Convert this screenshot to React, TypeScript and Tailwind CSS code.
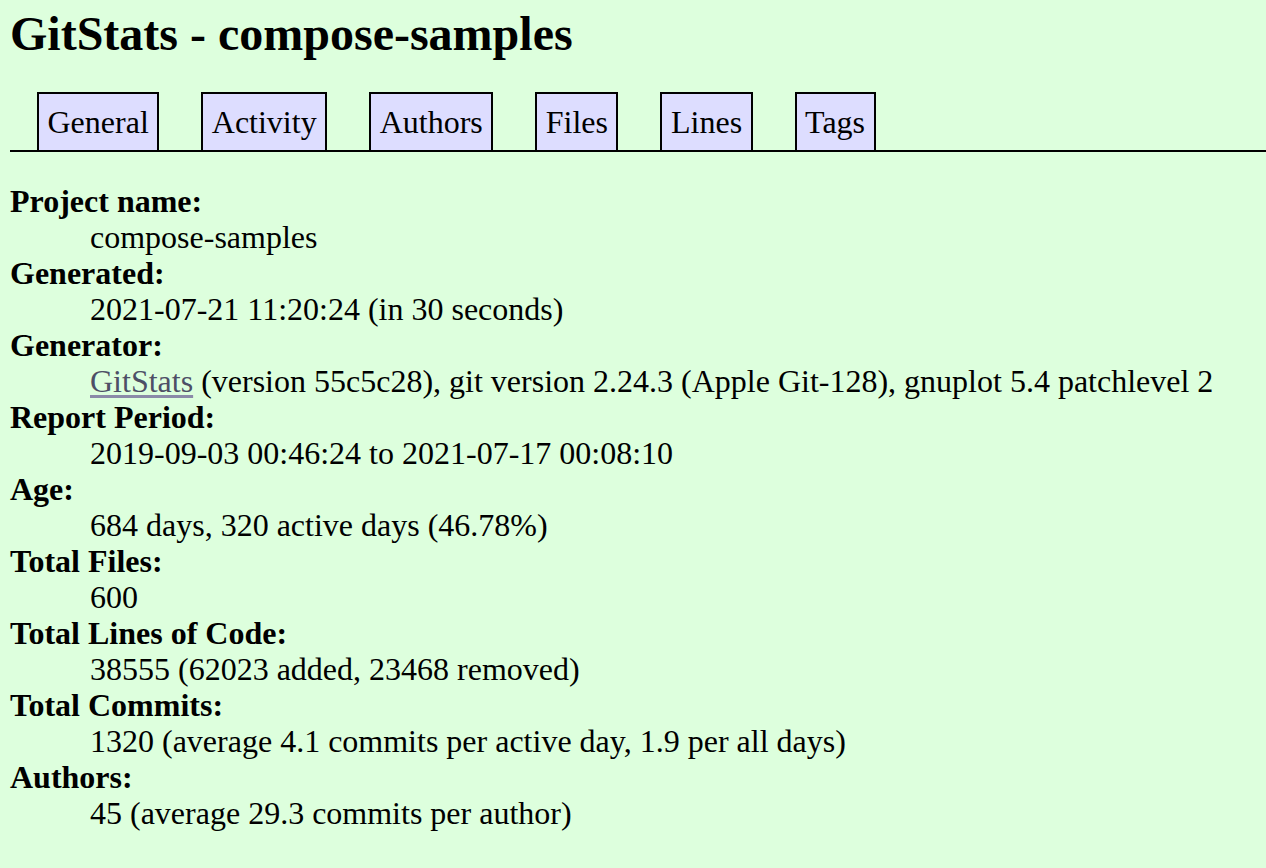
import React from "react";

const tabs = ["General", "Activity", "Authors", "Files", "Lines", "Tags"];

export default function App() {
  const rows: [string, React.ReactNode][] = [
    ["Project name", "compose-samples"],
    ["Generated", "2021-07-21 11:20:24 (in 30 seconds)"],
    [
      "Generator",
      <>
        <a href="#" className="text-[#4d4f66] underline decoration-[#8a8aa8] underline-offset-[3px]">GitStats</a> (version 55c5c28), git version 2.24.3 (Apple Git-128), gnuplot 5.4 patchlevel 2
      </>,
    ],
    ["Report Period", "2019-09-03 00:46:24 to 2021-07-17 00:08:10"],
    ["Age", "684 days, 320 active days (46.78%)"],
    ["Total Files", "600"],
    ["Total Lines of Code", "38555 (62023 added, 23468 removed)"],
    ["Total Commits", "1320 (average 4.1 commits per active day, 1.9 per all days)"],
    ["Authors", "45 (average 29.3 commits per author)"],
  ];
  return (
    <div className="min-h-screen bg-[#ddffdd] pl-[10px] text-black font-['Liberation_Serif','Times_New_Roman',serif] text-[32px] leading-[36px]">
      <h1 className="pt-[6px] text-[48px] leading-[56px] font-bold">GitStats - compose-samples</h1>
      <div className="mt-[30px] flex gap-[42px] border-b-2 border-black pl-[27px]">
        {tabs.map((t) => (
          <a
            key={t}
            href="#"
            className="block h-[58px] border-2 border-b-0 border-black bg-[#ddddff] px-[8.5px] pt-[10px] text-black no-underline"
          >
            {t}
          </a>
        ))}
      </div>
      <dl className="mt-[31px]">
        {rows.map(([k, v]) => (
          <React.Fragment key={k}>
            <dt className="font-bold">{k}:</dt>
            <dd className="ml-[80px]">{v}</dd>
          </React.Fragment>
        ))}
      </dl>
    </div>
  );
}
